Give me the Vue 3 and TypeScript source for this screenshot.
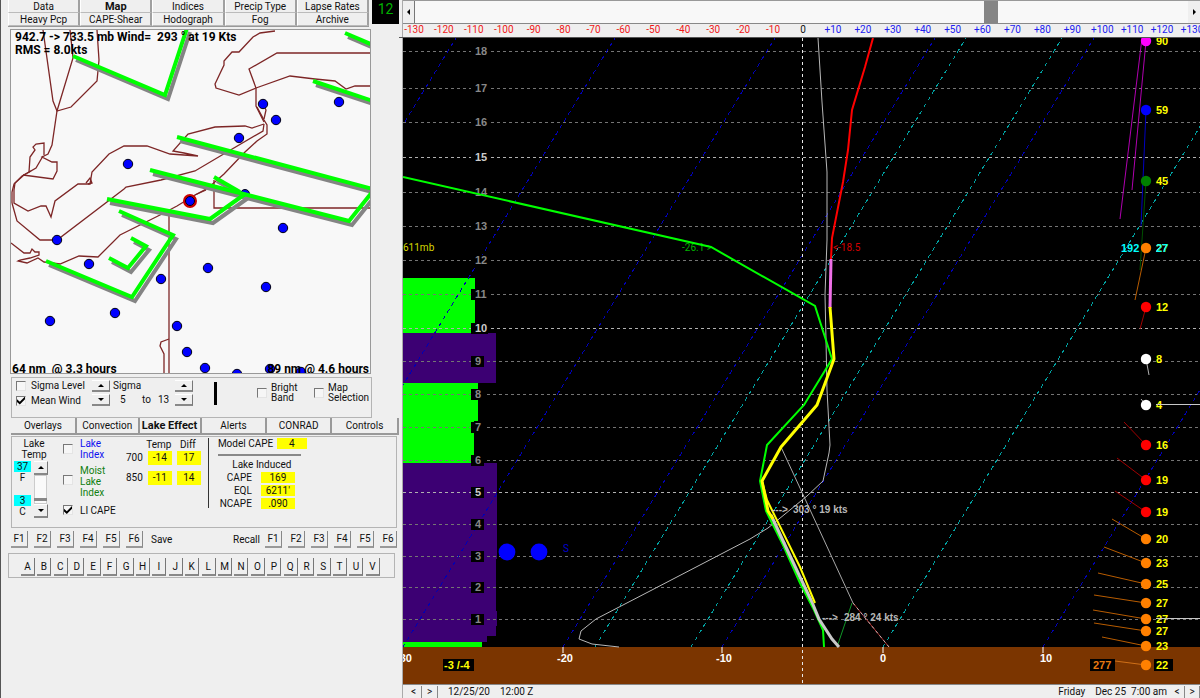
<script setup lang="ts">
import { ref } from 'vue'

interface Wind { y: number; speed: string; color: string; line: string; tx: number; ty: number }
interface Bar { y: number; h: number; w: number; color: string }

const topTabs = ['Data', 'Map', 'Indices', 'Precip Type', 'Lapse Rates', 'Heavy Pcp', 'CAPE-Shear', 'Hodograph', 'Fog', 'Archive']
const lowerTabs = ['Overlays', 'Convection', 'Lake Effect', 'Alerts', 'CONRAD', 'Controls']
const activeTop = ref('Map')
const activeLower = ref('Lake Effect')
const sigmaLevel = ref(false)
const meanWind = ref(true)
const brightBand = ref(false)
const mapSelection = ref(false)
const lakeIndex = ref(false)
const moistIndex = ref(false)
const liCape = ref(true)
const scroll = ref(75)
const lakeTemp = ref(8)

const fKeys = ['F1', 'F2', 'F3', 'F4', 'F5', 'F6']
const letters = 'ABCDEFGHIJKLMNOPQRSTUV'.split('')
const scale = Array.from({ length: 27 }, (_, i) => (i - 13) * 10)

const borders = [
  '43,30 53,101 57,111 71,107 97,81 99,60 97,30',
  '70,30 73,58 57,111 52,145 48,154 42,157 52,162 57,162 57,171 53,179 23,175',
  '43,156 36,168 29,172 30,157 35,150 33,147 36,144 44,143 44,155',
  '29,172 22,176 14,184 12,192 12,203',
  '31,171 24,175 15,183 14,190 14,203 28,211 41,206 46,206 51,217 55,201 78,184 90,184 92,172 109,154 124,146 147,146 170,154 198,156 184,153 173,151 188,134 215,127 245,126 252,128 264,124',
  '86,183 90,178 92,183 88,184',
  '12,203 17,221 40,240 57,240 124,189 126,187 161,180 195,171 222,155 263,131 264,124',
  '11,243 24,253 30,253 32,249 35,252 39,252 39,255 30,258 20,260 18,261 27,263 38,258 44,262 60,264 79,256 98,257 120,235 160,215 177,206 195,195 206,190',
  '195,195 208,188 224,174 245,152 257,141 267,134 267,125 264,120 257,107',
  '264,122 256,106 256,88 249,69 277,53 370,53',
  '256,88 239,95 216,88 215,84 224,65 224,61 232,52 239,52 253,37 260,33 275,31',
  '256,88 290,76 315,79 335,81 346,89 355,86 370,86',
  '264,119 266,110 263,104',
  '214,180 214,208 370,208',
  '169,213 169,373',
  '169,339 161,342 160,346 164,354 164,373',
]

const fronts = [
  '73,56 165,95 187,28',
  '345,33 373,45',
  '313,81 373,101',
  '177,137 373,189',
  '150,170 349,221 373,191',
  '214,177 240,192',
  '107,199 210,219 245,194',
  '119,211 173,235 132,297 46,261',
  '131,238 146,246 128,268 109,258',
]

const stations: [number, number][] = [
  [263, 104], [339, 102], [276, 120], [239, 138], [128, 164], [283, 228], [57, 240], [89, 264],
  [161, 279], [208, 268], [266, 287], [115, 313], [50, 321], [177, 326], [187, 352], [205, 368],
  [237, 374], [270, 369], [301, 372],
]

const levels: [number, number][] = [
  [18, 51], [17, 88], [16, 122], [15, 157], [14, 192], [13, 226], [12, 260], [11, 294], [10, 328],
  [9, 361], [8, 394], [7, 427], [6, 460], [5, 492], [4, 524], [3, 556], [2, 587], [1, 619],
]

const bars: Bar[] = [
  { y: 278, h: 56, w: 72, color: '#00ff00' },
  { y: 333, h: 50, w: 93, color: '#3c0073' },
  { y: 383, h: 38, w: 75, color: '#00ff00' },
  { y: 421, h: 43, w: 71, color: '#00ff00' },
  { y: 463, h: 173, w: 93, color: '#3c0073' },
  { y: 463, h: 96, w: 94, color: '#3c0073' },
  { y: 611, h: 15, w: 94, color: '#3c0073' },
  { y: 636, h: 6, w: 84, color: '#3c0073' },
  { y: 642, h: 5, w: 79, color: '#00ff00' },
]

const blueLines = [84, 243, 403, 563, 722, 1043]
const cyanLines = [595, 691, 883]

const winds: Wind[] = [
  { y: 41, speed: '90', color: '#ff00ff', line: '#b000b0', tx: 1132, ty: 190 },
  { y: 110, speed: '59', color: '#0000ff', line: '#0000c0', tx: 1141, ty: 226 },
  { y: 181, speed: '45', color: '#008000', line: '#005000', tx: 1140, ty: 270 },
  { y: 248, speed: '27', color: '#ff8000', line: '#b85c00', tx: 1135, ty: 300 },
  { y: 307, speed: '12', color: '#ff0000', line: '#a00000', tx: 1140, ty: 329 },
  { y: 359, speed: '8', color: '#ffffff', line: '#b0b0b0', tx: 1149, ty: 375 },
  { y: 405, speed: '4', color: '#ffffff', line: '#b0b0b0', tx: 1141, ty: 399 },
  { y: 445, speed: '16', color: '#ff0000', line: '#a00000', tx: 1124, ty: 422 },
  { y: 480, speed: '19', color: '#ff0000', line: '#a00000', tx: 1117, ty: 458 },
  { y: 512, speed: '19', color: '#ff0000', line: '#a00000', tx: 1115, ty: 491 },
  { y: 539, speed: '20', color: '#ff8000', line: '#b85c00', tx: 1112, ty: 519 },
  { y: 563, speed: '23', color: '#ff8000', line: '#b85c00', tx: 1104, ty: 547 },
  { y: 584, speed: '25', color: '#ff8000', line: '#b85c00', tx: 1098, ty: 573 },
  { y: 603, speed: '27', color: '#ff8000', line: '#b85c00', tx: 1094, ty: 595 },
  { y: 619, speed: '27', color: '#ff8000', line: '#b85c00', tx: 1093, ty: 610 },
  { y: 631, speed: '27', color: '#ff8000', line: '#b85c00', tx: 1094, ty: 623 },
  { y: 646, speed: '23', color: '#ff8000', line: '#b85c00', tx: 1102, ty: 637 },
  { y: 665, speed: '22', color: '#ff8000', line: '#d07018', tx: 1115, ty: 661 },
]

const ticks: [number, string][] = [[563, '-20'], [722, '-10'], [883, '0'], [1043, '10']]
</script>

<template>
  <div class="app">
    <aside class="side">
      <div class="head">
        <nav class="top-tabs">
          <button v-for="t in topTabs" :key="t" type="button" :class="{ on: t === activeTop }" @click="activeTop = t">{{ t }}</button>
        </nav>
        <output class="hour">12</output>
      </div>

      <svg class="map" viewBox="11 30 359 343">
        <g class="border-lines">
          <polyline v-for="p in borders" :key="p" :points="p" />
        </g>
        <circle cx="245" cy="194" r="4.5" class="station" />
        <circle v-for="s in stations" :key="s.join()" :cx="s[0]" :cy="s[1]" r="4.7" class="station" />
        <g class="shade" transform="translate(3 4)">
          <polyline v-for="p in fronts" :key="p" :points="p" />
        </g>
        <g class="front">
          <polyline v-for="p in fronts" :key="p" :points="p" />
        </g>
        <circle cx="190" cy="201" r="6" class="site" />
        <circle cx="190" cy="201" r="4.5" class="station" />
        <text x="15" y="41">942.7 -&gt; 733.5 mb Wind=</text>
        <text x="157" y="41">293 ° at 19 Kts</text>
        <text x="15" y="54">RMS = 8.0kts</text>
        <text x="12" y="373">64 nm&#160; @ 3.3 hours</text>
        <text x="369" y="373" text-anchor="end">89 nm @ 4.6 hours</text>
      </svg>

      <section class="panel wind">
        <div class="checks">
          <label><input v-model="sigmaLevel" type="checkbox">Sigma Level</label>
          <label><input v-model="meanWind" type="checkbox">Mean Wind</label>
        </div>
        <div class="spin">
          <button type="button" aria-label="Lower sigma up"><i class="up"></i></button>
          <button type="button" aria-label="Lower sigma down"><i class="down"></i></button>
        </div>
        <div class="sigma">
          <span>Sigma</span>
          <div><span>5</span><span>to</span><span>13</span></div>
        </div>
        <div class="spin">
          <button type="button" aria-label="Upper sigma up"><i class="up"></i></button>
          <button type="button" aria-label="Upper sigma down"><i class="down"></i></button>
        </div>
        <div class="thick"></div>
        <label class="two"><input v-model="brightBand" type="checkbox"><span>Bright<br>Band</span></label>
        <label class="two"><input v-model="mapSelection" type="checkbox"><span>Map<br>Selection</span></label>
      </section>

      <nav class="low-tabs">
        <button v-for="t in lowerTabs" :key="t" type="button" :class="{ on: t === activeLower }" @click="activeLower = t">{{ t }}</button>
      </nav>

      <section class="panel lake">
        <div class="lake-temp">
          <label for="lake-range">Lake<br>Temp</label>
          <div class="lake-row">
            <div class="temps">
              <div><b>37</b>F</div>
              <div><b>3</b>C</div>
            </div>
            <div class="vscroll">
              <button type="button" aria-label="Warmer"><i class="up"></i></button>
              <input id="lake-range" v-model="lakeTemp" type="range" min="0" max="100">
              <button type="button" aria-label="Colder"><i class="down"></i></button>
            </div>
          </div>
        </div>
        <div class="indices">
          <label class="blue"><input v-model="lakeIndex" type="checkbox"><span>Lake<br>Index</span></label>
          <label class="green"><input v-model="moistIndex" type="checkbox"><span>Moist<br>Lake<br>Index</span></label>
          <label><input v-model="liCape" type="checkbox"><span>LI CAPE</span></label>
        </div>
        <table class="diffs">
          <thead><tr><td></td><th>Temp</th><th>Diff</th></tr></thead>
          <tbody>
            <tr><th>700</th><td><b>-14</b></td><td><b>17</b></td></tr>
            <tr><th>850</th><td><b>-11</b></td><td><b>14</b></td></tr>
          </tbody>
        </table>
        <div class="cape">
          <div class="model"><span>Model CAPE</span><b>4</b></div>
          <hr>
          <p>Lake Induced</p>
          <dl>
            <dt>CAPE</dt><dd>169</dd>
            <dt>EQL</dt><dd>6211'</dd>
            <dt>NCAPE</dt><dd>.090</dd>
          </dl>
        </div>
      </section>

      <div class="fkeys">
        <div><button v-for="k in fKeys" :key="k" type="button">{{ k }}</button></div>
        <span>Save</span>
        <span class="recall">Recall</span>
        <div><button v-for="k in fKeys" :key="k" type="button">{{ k }}</button></div>
      </div>

      <section class="panel letters">
        <button v-for="l in letters" :key="l" type="button">{{ l }}</button>
      </section>
    </aside>

    <main class="sounding">
      <div class="hscroll">
        <button type="button" aria-label="Scroll left"><i class="left"></i></button>
        <input v-model="scroll" type="range" min="0" max="100" aria-label="Temperature offset">
        <button type="button" aria-label="Scroll right"><i class="right"></i></button>
      </div>
      <div class="scale">
        <span v-for="v in scale" :key="v" :class="{ neg: v < 0, pos: v > 0 }">{{ v > 0 ? '+' + v : v }}</span>
      </div>

      <svg class="chart" viewBox="403 38 797 646">
        <rect x="403" y="38" width="797" height="646" fill="#000" />
        <rect v-for="b in bars" :key="b.y + '-' + b.w" x="403" :y="b.y" :width="b.w" :height="b.h" :fill="b.color" />
        <rect x="403" y="647" width="797" height="37" fill="#7b3500" />
        <g class="levels">
          <template v-for="l in levels" :key="l[0]">
            <line x1="403" x2="471" :y1="l[1] + 0.5" :y2="l[1] + 0.5" :class="{ major: l[0] % 5 === 0 }" />
            <line :x1="l[0] > 9 ? 491 : 487" x2="1200" :y1="l[1] + 0.5" :y2="l[1] + 0.5" :class="{ major: l[0] % 5 === 0 }" />
          </template>
        </g>
        <g class="iso blue-iso">
          <line v-for="x in blueLines" :key="x" :x1="x" y1="647" :x2="x + 372" y2="38" />
        </g>
        <g class="iso cyan-iso">
          <line v-for="x in cyanLines" :key="x" :x1="x" y1="647" :x2="x + 371" y2="38" />
        </g>
        <g class="level-text">
          <template v-for="l in levels" :key="l[0]">
            <rect x="471" :y="l[1] - 5" :width="l[0] > 9 ? 17 : 13" height="11" />
            <text x="475" :y="l[1] + 4" :class="{ major: l[0] % 5 === 0 }">{{ l[0] }}</text>
          </template>
        </g>
        <line x1="802.5" x2="802.5" y1="38" y2="684" stroke="#e8e8e8" stroke-dasharray="3 3" />

        <text x="403" y="251" class="thin" fill="#d8d800">611mb</text>
        <text x="682" y="251" class="thin" fill="#00b000">-26.1 &gt;</text>
        <text x="833" y="251" class="thin" fill="#d00000">&lt;-18.5</text>
        <text x="563" y="552" class="thin" fill="#0000d0">S</text>
        <circle cx="507" cy="552" r="8.4" fill="#00f" />
        <circle cx="539" cy="552" r="8.4" fill="#00f" />

        <g class="trace">
          <polyline points="818,38 822,102 827,172 827,240 825,295 826,340 827,390 830,445 829,453 823,481 807,496 768,528 750,539 650,591 596,619 581,631 579,639 592,644 619,647" stroke="#b8b8b8" />
          <polyline points="781,447 800,488 853,603" stroke="#a8a8a8" />
          <line x1="853" y1="603" x2="889" y2="647" stroke="#b03030" />
          <line x1="853" y1="603" x2="889" y2="647" stroke="#c8b0b0" stroke-dasharray="3 3" />
          <line x1="852" y1="603" x2="837" y2="647" stroke="#109828" />
          <polyline points="403,177 711,247 815,306 832,359 804,405 767,445 760,481 766,511 783,545 800,583 814,610 823,630 824,647" stroke="#00ff00" stroke-width="2" />
          <polyline points="873,38 865,67 852,110 848,150 843,182 832,238 831,259" stroke="#f00" stroke-width="2" />
          <polyline points="771,515 785,545 800,577 812,602 819,619 832,639 839,647" stroke="#c8c8c8" stroke-width="3" />
          <polyline points="831,259 830,308" stroke="#f070e8" stroke-width="3" />
          <polyline points="830,307 834,359 817,405 781,447 762,481 768,511 773,519" stroke="#ff0" stroke-width="3" stroke-linejoin="round" />
          <polyline points="762,481 767,500 800,567 815,603" stroke="#ff0" stroke-width="2" />
        </g>

        <g class="kts">
          <text x="772" y="513">---&gt;</text>
          <text x="793" y="513">303 ° 19 kts</text>
          <text x="822" y="621">---&gt;</text>
          <text x="844" y="621">284 ° 24 kts</text>
        </g>

        <line x1="1142" y1="38" x2="1120" y2="219" stroke="#b000b0" />
        <line v-for="w in winds" :key="'l' + w.y" x1="1146" :y1="w.y" :x2="w.tx" :y2="w.ty" :stroke="w.line" />
        <rect x="1090" y="659" width="25" height="12" />
        <rect x="1154" y="659" width="19" height="12" />
        <circle v-for="w in winds" :key="'c' + w.y" cx="1146" :cy="w.y" r="5.2" :fill="w.color" />
        <g class="speeds">
          <text v-for="w in winds" :key="'s' + w.y" x="1156" :y="w.y + 4">{{ w.speed }}</text>
          <text x="1156" y="252" class="cyan">27</text>
          <text x="1121" y="252" class="cyan">192</text>
          <text x="1093" y="669" class="orange">277</text>
        </g>
        <path d="M1156 404.5H1200M1156 618.5H1200" stroke="#c8c8c8" fill="none" />

        <g class="axis">
          <text x="396" y="662">-30</text>
          <template v-for="t in ticks" :key="t[0]">
            <line :x1="t[0]" :x2="t[0]" y1="647" y2="653" />
            <text :x="t[0] + (t[1].startsWith('-') ? 2 : t[1] === '0' ? 0 : 3)" y="662" text-anchor="middle">{{ t[1] }}</text>
          </template>
          <rect x="443" y="659" width="31" height="12" />
          <text x="444" y="669" class="yellow">-3 /-4</text>
        </g>
      </svg>

      <footer class="foot">
        <div class="step"><button type="button" aria-label="Previous run">&lt;</button><button type="button" aria-label="Next run">&gt;</button></div>
        <span>12/25/20</span><span>12:00 Z</span>
        <span class="day">Friday</span><span>Dec 25&#160; 7:00 am</span>
        <div class="step last"><button type="button" aria-label="Previous hour">&lt;</button><button type="button" aria-label="Next hour">&gt;</button></div>
      </footer>
    </main>
  </div>
</template>

<style>
body { margin: 0; background: #efefef; }
</style>

<style scoped>
* { box-sizing: border-box; }
.app {
  display: grid;
  grid-template-columns: minmax(0, 403fr) minmax(0, 797fr);
  min-height: 100vh;
  background: #efefef;
  color: #111;
  font: 10px/11px Roboto, "Liberation Sans", Arial, sans-serif;
  overflow: hidden;
}
button { font: inherit; color: inherit; padding: 0; margin: 0; background: #efefef; border: 0; white-space: nowrap; }
b { font-weight: normal; }
.side { border-left: 1px solid #555; padding: 0 3px 0 7px; border-right: 1px solid #aaa; }
.head { display: flex; gap: 3px; margin-bottom: 3px; }
.top-tabs { flex: 1; display: grid; grid-template-columns: repeat(5, 1fr); grid-auto-rows: 13px; border-bottom: 1px solid #999; }
.top-tabs button { border-right: 2px solid #a0a0a0; border-bottom: 1px solid #bbb; border-left: 1px solid #fff; }
button.on { font-weight: bold; font-size: 11px; }
.hour { width: 27px; height: 24px; background: #000; color: #00b000; font-size: 14px; line-height: 18px; text-align: center; }

.map { display: block; width: auto; margin: 0 29px 4px 3px; background: #f8f8f8; outline: 1px solid #999; overflow: hidden; }
.border-lines { fill: none; stroke: #7d2626; stroke-width: 1.3; }
.shade, .front { fill: none; stroke-width: 4; }
.shade { stroke: #848484; }
.front { stroke: #00ff00; }
.station { fill: #00f; stroke: #001; stroke-width: 1; }
.site { fill: #f00; stroke: #c00; stroke-width: 2; }
.map text { font: bold 12px Roboto, "Liberation Sans", Arial, sans-serif; fill: #000; }

.panel { border: 1px solid #b4b4b4; margin-left: 3px; }
.wind { display: flex; margin-right: 27px; height: 41px; padding: 2px 2px 0 4px; }
input[type="checkbox"] {
  appearance: none; width: 10px; height: 10px; margin: 0; flex: none;
  border: 1px solid #e4e4e4; border-top-color: #777; border-left-color: #777; background: #f6f6f6;
}
input[type="checkbox"]:checked::before {
  content: ""; display: block; width: 8px; height: 8px; background: #000;
  clip-path: polygon(0 35%, 35% 65%, 100% 0, 100% 35%, 35% 100%, 0 70%);
}
.checks { width: 76px; flex: none; display: flex; flex-direction: column; gap: 4px; }
.checks label { display: flex; gap: 5px; align-items: center; white-space: nowrap; }
.spin { width: 18px; flex: none; display: flex; flex-direction: column; gap: 2px; }
.spin button, .vscroll button { height: 12px; border-right: 1px solid #777; border-bottom: 2px solid #888; border-top: 1px solid #fff; display: flex; align-items: center; justify-content: center; }
i { display: block; border: 3px solid transparent; }
.up { border-top: 0; border-bottom-color: #000; }
.down { border-bottom: 0; border-top-color: #000; }
.left { border-left: 0; border-right-color: #000; }
.right { border-right: 0; border-left-color: #000; }
.sigma { width: 65px; flex: none; padding-left: 3px; display: flex; flex-direction: column; gap: 3px; }
.sigma div { display: grid; grid-template-columns: 22px 16px 16px; padding-left: 7px; }
.thick { width: 3px; flex: none; height: 23px; background: #000; margin: 2px 40px 0 21px; }
.two { display: flex; gap: 4px; padding-top: 3px; width: 57px; flex: none; line-height: 10px; }
.two input { margin-top: 5px; }

.low-tabs { display: grid; grid-template-columns: 66fr 63fr 62fr 66fr 65fr 67fr; margin-left: 3px; height: 17px; }
.low-tabs button { border-right: 2px solid #999; border-bottom: 2px solid #999; }

.lake { display: flex; height: 92px; margin-right: 2px; margin-top: 1px; padding-top: 1px; }
.lake-temp { width: 51px; flex: none; padding-left: 2px; }
.lake-temp > label { display: block; text-align: center; width: 40px; }
.lake-row { display: flex; gap: 3px; margin-top: 1px; }
.temps { width: 17px; text-align: center; height: 56px; display: flex; flex-direction: column; justify-content: space-between; }
.temps b { display: block; background: #0ff; }
.vscroll { width: 14px; display: flex; flex-direction: column; }
.vscroll button { height: 14px; flex: none; }
.vscroll input { appearance: none; writing-mode: vertical-lr; direction: rtl; width: 13px; height: 29px; margin: 0; background: #fafafa; border: 1px solid #ccc; }
.vscroll input::-webkit-slider-thumb { appearance: none; width: 13px; height: 3px; background: #888; }
.indices { width: 63px; flex: none; display: flex; flex-direction: column; gap: 5px; }
.indices label { display: flex; gap: 7px; }
.indices input { margin-top: 6px; }
.indices label:last-child { margin-top: 2px; }
.indices label:last-child input { margin-top: 0; }
.indices label:nth-child(2) input { margin-top: 10px; }
.blue { color: #1010f0; }
.green { color: #108010; }
.diffs { border-collapse: collapse; align-self: flex-start; line-height: 14px; }
.diffs th { font-weight: normal; padding: 0; text-align: center; vertical-align: top; }
.diffs thead th { line-height: 13px; padding-left: 3px; }
.diffs td { padding: 0 0 0 5px; vertical-align: top; }
.diffs tbody tr { height: 20px; }
.diffs td b { display: block; width: 24px; background: #ff0; text-align: center; }
.cape { border-left: 1px solid #333; height: 70px; margin-left: 7px; padding-left: 9px; }
.model { display: flex; gap: 9px; }
.model span { width: 50px; white-space: nowrap; }
.model b { background: #ff0; width: 30px; text-align: center; }
hr { width: 83px; border: 0; border-top: 2px solid #888; margin: 5px 0 3px; }
.cape p { margin: 0 0 2px; width: 88px; text-align: center; }
dl { display: grid; grid-template-columns: 34px 34px; column-gap: 9px; row-gap: 2px; margin: 0; }
dt { text-align: right; }
dd { margin: 0; background: #ff0; text-align: center; }

.fkeys { display: flex; align-items: center; margin: 3px 2px 5px 3px; }
.fkeys div { display: flex; gap: 6px; }
.fkeys button { width: 17px; height: 17px; border-right: 1px solid #888; border-bottom: 2px solid #999; }
.fkeys span { margin-left: 8px; }
.fkeys .recall { margin-left: auto; margin-right: 5px; }
.letters { margin: 0 4px 0 0; height: 25px; padding: 4px 14px 0 12px; display: flex; justify-content: space-between; }
.letters button { width: 14px; height: 18px; border-right: 1px solid #777; border-bottom: 2px solid #888; }

.sounding { display: flex; flex-direction: column; }
.hscroll { height: 24px; display: flex; border-top: 1px solid #999; border-bottom: 1px solid #888; }
.hscroll button { width: 12px; display: flex; align-items: center; justify-content: center; border-right: 1px solid #777; flex: none; }
.hscroll button:last-child { border-right: 0; }
.hscroll input { appearance: none; flex: 1; min-width: 0; margin: 0; background: #f8f8f8; height: 22px; }
.hscroll input::-webkit-slider-thumb { appearance: none; width: 14px; height: 22px; background: #858585; }
.scale { height: 14px; display: grid; grid-template-columns: repeat(27, 1fr); margin: 0 -7px 0 -4px; text-align: center; overflow: hidden; border-bottom: 1px solid #555; }
.neg { color: #f01818; }
.pos { color: #2020f0; }
.chart { display: block; width: 100%; }
.levels line { stroke: #747474; stroke-dasharray: 3 3; }
.levels .major { stroke: #b0b0b0; }
.iso line { stroke-dasharray: 4 4; }
.blue-iso { stroke: #0000b4; }
.cyan-iso { stroke: #00a0a0; }
.iso, .levels { shape-rendering: crispEdges; }
.level-text text { font: bold 11px "Liberation Sans", Arial, sans-serif; fill: #888; }
.level-text text.major { fill: #ccc; }
.thin { font-size: 10px; }
.trace { fill: none; }
.kts { font: bold 10px "Liberation Sans", Arial, sans-serif; fill: #b8b8b8; }
.speeds { font: bold 11px "Liberation Sans", Arial, sans-serif; fill: #ff0; }
.speeds .cyan { fill: #0ff; }
.speeds .orange { fill: #e87810; }
.axis { font: bold 11px "Liberation Sans", Arial, sans-serif; fill: #fff; }
.axis line { stroke: #fff; }
.axis rect { fill: #000; }
.axis .yellow { fill: #ff0; }
.foot { flex: 1; min-height: 14px; display: flex; align-items: center; gap: 10px; line-height: 14px; border-top: 1px solid #888; padding-left: 3px; }
.step { display: flex; }
.step.last { margin-left: -7px; }
.step button { width: 16px; height: 13px; line-height: 11px; border-right: 1px solid #888; border-bottom: 1px solid #999; }
.step.last button { width: 15px; }
.foot .day { margin-left: auto; }
</style>
